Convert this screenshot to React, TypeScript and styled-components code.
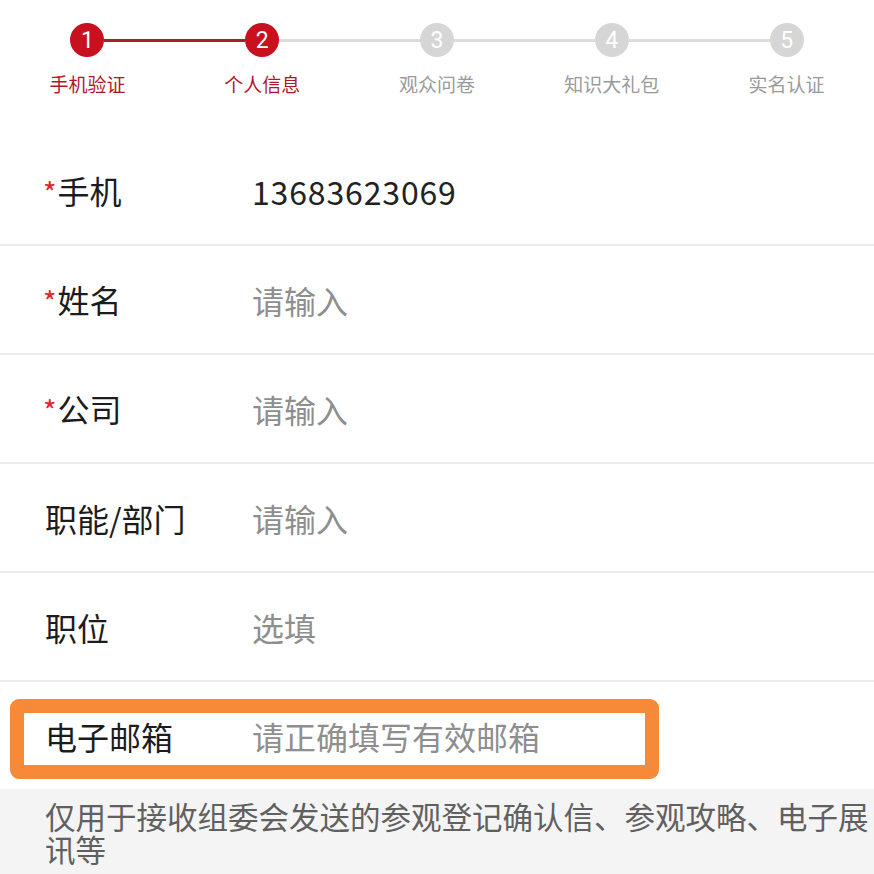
import { createGlobalStyle, styled } from "styled-components";

const GlobalStyle = createGlobalStyle`
  html, body {
    margin: 0;
    padding: 0;
    background: #ffffff;
  }
  body {
    font-family: "Noto Sans CJK SC", "Noto Sans", sans-serif;
    -webkit-font-smoothing: antialiased;
  }
`;

const Page = styled.div`
  min-height: 100vh;
  display: flex;
  flex-direction: column;
  background: #ffffff;
`;

const Stepper = styled.div`
  display: grid;
  grid-template-columns: repeat(5, 1fr);
  padding: 23px 0 40px;
`;

const Step = styled.div`
  display: flex;
  flex-direction: column;
  align-items: center;
  gap: 14px;
`;

const Track = styled.div`
  display: flex;
  align-items: center;
  width: 100%;
`;

const Line = styled.div<{ $done: boolean; $hidden: boolean }>`
  flex: 1;
  height: 3px;
  background: ${(p) => (p.$hidden ? "transparent" : p.$done ? "#a8202b" : "#dcdcdc")};
`;

const Dot = styled.div<{ $active: boolean }>`
  width: 34px;
  height: 34px;
  border-radius: 50%;
  display: flex;
  align-items: center;
  justify-content: center;
  background: ${(p) => (p.$active ? "#c8101f" : "#d6d6d6")};
  color: #ffffff;
  font-family: "Roboto", "Noto Sans", sans-serif;
  font-size: 23px;
  line-height: 1;
`;

const StepLabel = styled.div<{ $active: boolean }>`
  font-size: 19px;
  line-height: 26px;
  color: ${(p) => (p.$active ? "#b3162a" : "#9a9a9a")};
`;

const Form = styled.div`
  display: flex;
  flex-direction: column;
`;

const Row = styled.div<{ $last?: boolean }>`
  position: relative;
  display: flex;
  align-items: center;
  height: 107px;
  border-bottom: ${(p) => (p.$last ? "none" : "2px solid #ececec")};
`;

const Label = styled.div`
  width: 207px;
  padding-left: 45px;
  font-size: 32px;
  line-height: 40px;
  color: #1c1c1c;
  flex-shrink: 0;
`;

const Star = styled.span`
  color: #e0252b;
  font-size: 29px;
  margin-left: -2px;
  margin-right: 1px;
`;

const Value = styled.div<{ $placeholder: boolean }>`
  font-size: 32px;
  line-height: 40px;
  letter-spacing: ${(p) => (p.$placeholder ? "0" : "0.85px")};
  color: ${(p) => (p.$placeholder ? "#8e8e8e" : "#222222")};
`;

const Highlight = styled.div`
  position: absolute;
  left: 10px;
  top: 17px;
  width: 649px;
  height: 80px;
  box-sizing: border-box;
  border: 14px solid #f78a38;
  border-radius: 9px;
  pointer-events: none;
`;

const Note = styled.div`
  flex: 1;
  background: #f4f4f4;
  padding: 11px 0 12px 45px;
  font-size: 30.5px;
  line-height: 33px;
  color: #606060;
`;

const steps = ["手机验证", "个人信息", "观众问卷", "知识大礼包", "实名认证"];
const current = 1;

const fields = [
  { label: "手机", required: true, value: "13683623069", placeholder: false },
  { label: "姓名", required: true, value: "请输入", placeholder: true },
  { label: "公司", required: true, value: "请输入", placeholder: true },
  { label: "职能/部门", required: false, value: "请输入", placeholder: true },
  { label: "职位", required: false, value: "选填", placeholder: true },
];

const App = () => {
  return (
    <Page>
      <GlobalStyle />
      <Stepper>
        {steps.map((name, i) => (
          <Step key={name}>
            <Track>
              <Line $hidden={i === 0} $done={i <= current} />
              <Dot $active={i <= current}>{i + 1}</Dot>
              <Line $hidden={i === steps.length - 1} $done={i < current} />
            </Track>
            <StepLabel $active={i <= current}>{name}</StepLabel>
          </Step>
        ))}
      </Stepper>

      <Form>
        {fields.map((f) => (
          <Row key={f.label}>
            <Label>
              {f.required && <Star>*</Star>}
              {f.label}
            </Label>
            <Value $placeholder={f.placeholder}>{f.value}</Value>
          </Row>
        ))}
        <Row $last>
          <Label>电子邮箱</Label>
          <Value $placeholder>请正确填写有效邮箱</Value>
          <Highlight />
        </Row>
      </Form>

      <Note>仅用于接收组委会发送的参观登记确认信、参观攻略、电子展讯等</Note>
    </Page>
  );
};

export default App;
